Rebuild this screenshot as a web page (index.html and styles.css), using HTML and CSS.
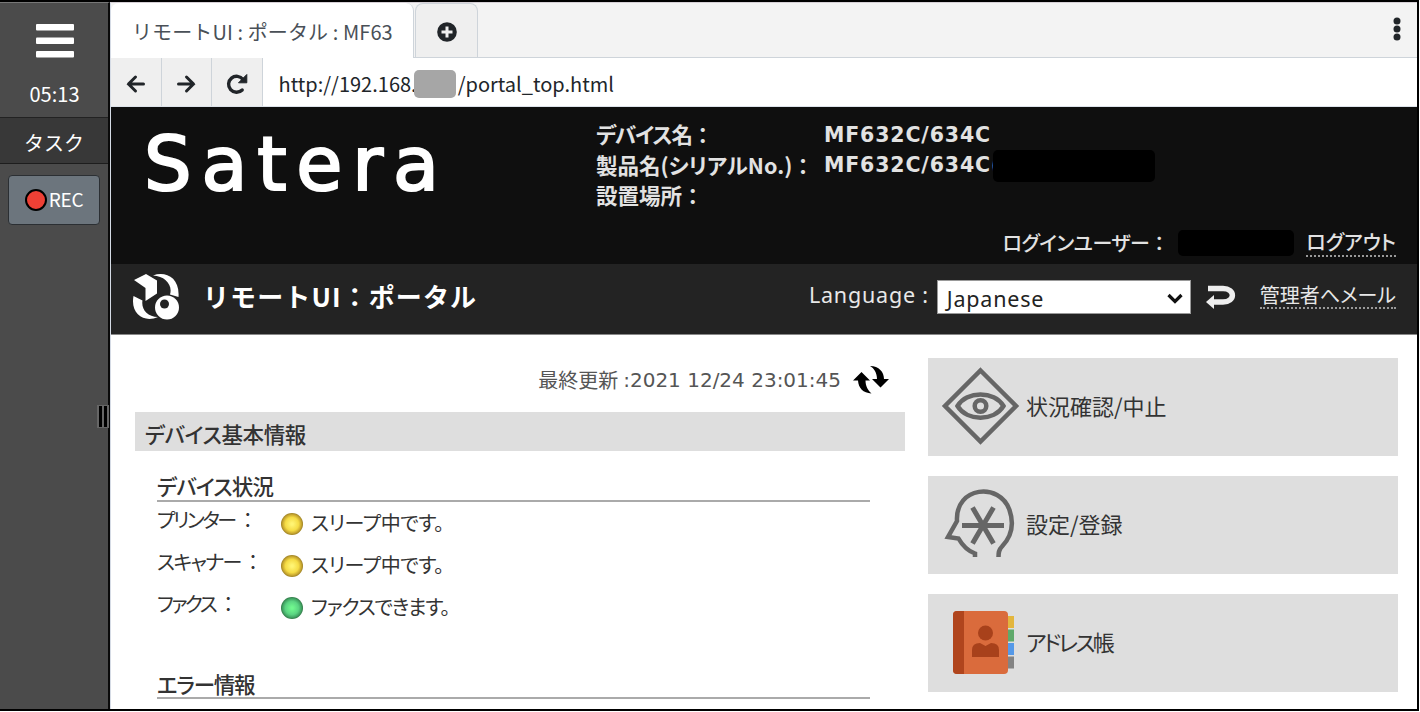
FILE: index.html
```html
<!DOCTYPE html>
<html lang="ja">
<head>
  <meta charset="UTF-8">
  <meta name="viewport" content="width=device-width, initial-scale=1.0">
  <title>リモートUI : ポータル : MF632C/634C</title>
  <link rel="stylesheet" href="styles.css">
</head>
<body>
  <div class="app">
    <!-- Sidebar -->
    <aside class="sidebar">
      <div class="sidebar-top">
        <svg class="menu-icon" viewBox="0 0 38 34" fill="#fff"><rect width="38" height="6.500" rx="1"/><rect y="13.500" width="38" height="6.500" rx="1"/><rect y="27" width="38" height="6.500" rx="1"/></svg>
        <span class="clock">05:13</span>
      </div>
      <div class="task-title">タスク</div>
      <button type="button" class="rec-button"><span class="rec-dot"></span><span class="rec-text">REC</span></button>
      <div class="resize-handle"><i></i><i></i></div>
    </aside>

    <main class="browser">
      <!-- Tabs -->
      <div class="tabs">
        <div class="tab"><span class="tab-text">リモートUI : ポータル : MF63</span></div>
        <div class="tab-add">
          <svg width="20" height="20" viewBox="0 0 20 20"><circle cx="10" cy="10" r="9.800" fill="#212529"/><path d="M10 4.500v11M4.500 10h11" stroke="#f0f0f0" stroke-width="3"/></svg>
        </div>
        <svg class="more-icon" width="8" height="24" viewBox="0 0 8 24" fill="#212529"><circle cx="4" cy="4" r="3.500"/><circle cx="4" cy="12" r="3.500"/><circle cx="4" cy="20" r="3.500"/></svg>
      </div>
      <!-- Address bar -->
      <div class="address-bar">
        <div class="nav-button">
          <svg width="20" height="20" viewBox="0 0 20 20" fill="none" stroke="#212529" stroke-width="3" stroke-linecap="round"><path d="M9.500 3 2.500 10l7 7M2.500 10H17.500"/></svg>
        </div>
        <div class="nav-button">
          <svg width="20" height="20" viewBox="0 0 20 20" fill="none" stroke="#212529" stroke-width="3" stroke-linecap="round"><path d="M10.500 3 17.500 10l-7 7M17.500 10H2.500"/></svg>
        </div>
        <div class="nav-button">
          <svg width="22" height="22" viewBox="0 0 22 22"><path d="M17 6.500A8 8 0 1 0 16.200 17" fill="none" stroke="#212529" stroke-width="3.400" stroke-linecap="round"/><path d="M20.800 1.500v8.300h-8.300z" fill="#212529" stroke="#212529" stroke-linejoin="round"/></svg>
        </div>
        <div class="url">http://192.168.<span class="mask mask-url"></span><span>/portal_top.html</span></div>
      </div>

      <!-- Device header -->
      <header class="device-header">
        <div class="brand">Satera</div>
        <dl class="device-info">
          <dt><span class="w-name">デバイス名</span><span class="colon">：</span></dt><dd>MF632C/634C</dd>
          <dt><span class="w-serial">製品名(シリアルNo.)</span><span class="colon">：</span></dt><dd>MF632C/634C(<span class="mask mask-serial"></span></dd>
          <dt><span>設置場所</span><span class="colon">：</span></dt><dd></dd>
        </dl>
        <div class="login">
          <span class="login-label">ログインユーザー</span><span class="colon">：</span>
          <span class="mask mask-user"></span>
          <a class="logout">ログアウト</a>
        </div>
      </header>

      <div class="title-bar">
        <svg class="portal-icon" width="48" height="48" viewBox="0 0 48 48">
          <path d="M2 7 14 1 25 7.500v13L13.500 28V15z" fill="#fff"/>
          <path d="M21 2.500C33-2 48 4 46.500 24L38 21.500C41 12 33 3 21 2.500z" fill="#fff"/>
          <path d="M1.500 23 10.500 27.500C9 36 15 44 26 44 13 50-2 42 1.500 23z" fill="#fff"/>
          <circle cx="35" cy="34.500" r="12" fill="#fff"/><circle cx="32.500" cy="31" r="4.500" fill="#232323"/>
        </svg>
        <h1>リモートUI：ポータル</h1>
        <span class="lang-label">Language :</span>
        <div class="select"><span>Japanese</span>
          <svg width="16" height="12" viewBox="0 0 16 12"><path d="M1.500 2 8 8.500 14.500 2" fill="none" stroke="#111" stroke-width="3.200"/></svg>
        </div>
        <svg class="apply-icon" width="30" height="26" viewBox="0 0 30 26"><path d="M2 4.500H17C29.500 4.500 29.500 18 17 18H8" fill="none" stroke="#eee" stroke-width="5.500"/><path d="M0 18 8 11v14z" fill="#eee"/></svg>
        <a class="mail">管理者へメール</a>
      </div>

      <!-- Portal content -->
      <div class="content">
        <section class="status">
          <div class="updated">
            <span class="updated-label">最終更新</span><span class="updated-time">:2021 12/24 23:01:45</span>
            <svg class="refresh-icon" width="36" height="30" viewBox="0 0 36 30"><path d="M8.500 7 17 15.500H12.500C12.500 21 15 25.500 18.500 28.500 10 28 5.500 23 5 15.500H0z"/><path d="M17 1C26 1 31 7 31 14h5L27.500 22.500 19 14H24C24 8 21 3 17 1z"/></svg>
          </div>
          <h2>デバイス基本情報</h2>
          <h3 class="h-status">デバイス状況</h3>
          <ul>
            <li><span class="name"><span class="n-printer">プリンター</span><span class="colon">：</span></span><i class="lamp yellow"></i><span class="state">スリープ中です。</span></li>
            <li><span class="name"><span class="n-scanner">スキャナー</span><span class="colon">：</span></span><i class="lamp yellow"></i><span class="state">スリープ中です。</span></li>
            <li><span class="name"><span class="n-fax">ファクス</span><span class="colon">：</span></span><i class="lamp green"></i><span class="state state-fax">ファクスできます。</span></li>
          </ul>
          <h3 class="h-error">エラー情報</h3>
        </section>

        <nav class="menu">
          <a class="menu-item">
            <svg width="80" height="80" viewBox="0 0 80 80" fill="none" stroke="#666" stroke-width="4.500"><path d="M40.500 4.500 76 40 40.500 75.500 5 40z"/><path d="M17.500 40C27 24.500 54 24.500 63.500 40 54 55.500 27 55.500 17.500 40z"/><circle cx="40.500" cy="40" r="5.800"/></svg>
            <span>状況確認/中止</span>
          </a>
          <a class="menu-item">
            <svg width="80" height="80" viewBox="0 0 80 80" fill="none" stroke="#666" stroke-width="4.500"><path d="M35 73V69.500C28 67 22.500 61.500 18.500 54.500L8 53 17 37C15 2 60-2 69.500 26 75 42 71 53 62 62.500 58.500 66 58.500 69 58.500 73"/><path d="M22 41.500h42M32.500 23.500l21 36M53.500 23.500l-21 36" stroke-width="5"/></svg>
            <span>設定/登録</span>
          </a>
          <a class="menu-item">
            <svg width="80" height="80" viewBox="0 0 80 80">
              <path d="M66 14h8v12h-8z" fill="#e3b63d"/><path d="M66 27.500h8v12h-8z" fill="#5fa96b"/><path d="M66 41h8v12h-8z" fill="#5599e8"/><path d="M66 54.500h8v12h-8z" fill="#838383"/>
              <rect x="13" y="9" width="55" height="63" rx="4" fill="#da6b3c"/>
              <path d="M17 9h7v63h-7a4 4 0 0 1-4-4V13a4 4 0 0 1 4-4z" fill="#b0451d"/>
              <circle cx="45.500" cy="31" r="7.500" fill="#a8411b"/><path d="M32 55V48q0-7 8-7l5.500 3 5.500-3q8 0 8 7v7z" fill="#a8411b"/>
            </svg>
            <span class="m-address">アドレス帳</span>
          </a>
        </nav>
      </div>
    </main>
  </div>
</body>
</html>
```
FILE: styles.css
```css
* {
  box-sizing: border-box;
}

body {
  margin: 0;
  width: 1420px;
  height: 712px;
  background: #fff;
  overflow: hidden;
  font-family: "Noto Sans CJK JP", sans-serif;
  font-size: 20px;
  line-height: 1;
  white-space: nowrap;
}

h1, h2, h3, ul, dl, dd {
  margin: 0;
  padding: 0;
}

.app {
  display: flex;
  width: 1419px;
  height: 711px;
  border: solid #000;
  border-width: 2px 2px 2px 0;
}

/* Sidebar */
.sidebar {
  position: relative;
  display: flex;
  flex-direction: column;
  align-items: center;
  width: 110px;
  background: #4b4b4b;
  border-right: 2px solid #0a0a0a;
  border-top: 1px solid #777;
  color: #fff;
}

.sidebar-top {
  display: flex;
  flex-direction: column;
  align-items: center;
  width: 100%;
  height: 115px;
  padding: 21px 0 0 1px;
  border-bottom: 1px solid #222;
}

.menu-icon {
  width: 38px;
  height: 34px;
}

.clock {
  margin-top: 26px;
}

.task-title {
  width: 100%;
  height: 46px;
  line-height: 49px;
  text-align: center;
  background: #383838;
  border-bottom: 1px solid #1d1d1d;
}

.rec-button {
  display: flex;
  align-items: center;
  justify-content: center;
  gap: 2px;
  width: 92px;
  height: 50px;
  margin: 11px 0 0;
  padding: 0;
  border: 1px solid #2b2f33;
  border-radius: 4px;
  background: #6c757d;
  color: #fff;
  font: 19px "Noto Sans CJK JP", sans-serif;
}

.rec-text {
  padding-bottom: 3px;
  letter-spacing: -0.3px;
}

.rec-dot {
  width: 22px;
  height: 22px;
  border: 2px solid #000;
  border-radius: 50%;
  background: #ee4035;
}

.resize-handle {
  position: absolute;
  top: 402px;
  right: -1px;
  display: flex;
  gap: 2px;
  padding: 1px 2px 1px 2px;
  background: #666;
}

.resize-handle i {
  width: 3px;
  height: 21px;
  background: #000;
}

/* Browser chrome */
.browser {
  flex: 1;
  display: flex;
  flex-direction: column;
  border-left: 1px solid #d5dbe5;
  border-top: 1px solid #d6d0d6;
}

.tabs {
  display: flex;
  height: 55px;
  background: #f3f3f3;
  border-bottom: 1px solid #ced4da;
}

.tab {
  width: 303px;
  height: 55px;
  padding-left: 21px;
  line-height: 57px;
  background: #fff;
  border-right: 1px solid #ced4da;
  border-radius: 8px 8px 0 0;
  color: #495057;
}

.tab-text {
  letter-spacing: 0.1px;
}

.tab-add {
  display: flex;
  align-items: center;
  justify-content: center;
  width: 63px;
  margin-left: 1px;
  padding-top: 2px;
  background: #efefef;
  border: 1px solid #ced4da;
  border-bottom: 0;
  border-radius: 8px 8px 0 0;
}

.more-icon {
  margin: 14px 16px 0 auto;
}

.address-bar {
  display: flex;
  height: 49px;
  background: #fff;
  border-bottom: 1px solid #dde3ea;
}

.nav-button {
  display: flex;
  align-items: center;
  justify-content: center;
  width: 50.500px;
  padding-top: 4px;
  background: #efefef;
  border-right: 1px solid #ced4da;
}

.url {
  display: flex;
  align-items: center;
  padding: 4px 0 0 16px;
  color: #212529;
}

.mask {
  display: inline-block;
  flex: none;
  border-radius: 5px;
  background: #000;
}

.mask-url {
  width: 42px;
  height: 28px;
  margin: 0 2px 0 -3px;
  background: #a6a6a6;
}

/* Device header */
.device-header {
  display: grid;
  grid-template-columns: 485px 1fr;
  grid-template-rows: 117px 40px;
  height: 157px;
  background: #0f0f0f;
  color: #e2e2e2;
  font-feature-settings: "palt";
}

.colon {
  font-feature-settings: normal;
}

.brand {
  padding: 20px 0 0 33px;
  font-family: "DejaVu Sans", sans-serif;
  font-size: 75px;
  letter-spacing: 9.800px;
  color: #fff;
  -webkit-text-stroke: 2.200px #fff;
}

.device-info {
  display: grid;
  grid-template-columns: 228px 1fr;
  grid-auto-rows: 30.500px;
  align-content: start;
  padding-top: 13px;
  font-size: 21.500px;
  font-weight: 700;
  line-height: 27px;
}

.w-name {
  letter-spacing: -1.2px;
}

.device-info dd {
  display: flex;
  align-items: center;
  font-family: "DejaVu Sans", sans-serif;
  font-size: 20.500px;
  letter-spacing: 0.85px;
}

.mask-serial {
  width: 162px;
  height: 32px;
  margin-left: -8px;
}

.login {
  grid-column: 1 / 3;
  display: flex;
  align-items: center;
  justify-content: flex-end;
  padding: 0 21px 3px 0;
  font-weight: 500;
}

.login-label {
  letter-spacing: -0.5px;
}

.mask-user {
  width: 116px;
  height: 26px;
  margin: 0 12px 0 9px;
}

.logout {
  padding: 4px 0 3px;
  border-bottom: 2px dotted #999;
}

/* Title bar */
.title-bar {
  display: flex;
  align-items: center;
  height: 71px;
  padding: 0 21px 4px;
  background: #232323;
  border-bottom: 1px solid #888;
  color: #e8e8e8;
}

.title-bar h1 {
  margin: -3px 0 0 23px;
  font-size: 26px;
  letter-spacing: 1.1px;
  color: #fff;
}

.lang-label {
  margin: -4px 0 0 auto;
  font-family: "Noto Sans", sans-serif;
  font-size: 21.500px;
  letter-spacing: 0.8px;
}

.select {
  display: flex;
  align-items: center;
  justify-content: space-between;
  width: 254px;
  height: 34px;
  margin: 0 15px 0 8px;
  padding: 3px 7px 0 9px;
  background: #fff;
  border: 1px solid #999;
  color: #222;
  font-family: "Noto Sans", sans-serif;
  font-size: 21.500px;
  letter-spacing: 0.8px;
}

.mail {
  margin-left: 24px;
  padding-bottom: 2px;
  border-bottom: 2px dotted #999;
  font-feature-settings: "palt";
}

/* Content */
.content {
  flex: 1;
  display: flex;
  min-height: 0;
  overflow: hidden;
  background: #fff;
  color: #333;
  font-feature-settings: "palt";
}

.status {
  width: 794px;
  padding: 0 0 0 24px;
}

.updated {
  display: flex;
  align-items: center;
  height: 77px;
  padding: 13px 16px 0 0;
  justify-content: flex-end;
  color: #555;
}

.updated-time {
  margin: 0 12px 0 5px;
  font-family: "DejaVu Sans", sans-serif;
  font-size: 20px;
}

.refresh-icon {
  fill: #000;
}

.status h2 {
  height: 39px;
  padding-left: 10px;
  background: #dedede;
  font-size: 21.500px;
  line-height: 44px;
  font-weight: 500;
  letter-spacing: -0.4px;
}

.status h3 {
  width: 713px;
  margin-left: 22px;
  border-bottom: 2px solid #aaa;
  font-size: 21.500px;
  font-weight: 500;
  letter-spacing: -0.8px;
}

.status .h-status {
  margin-top: 20px;
  height: 31px;
  line-height: 30px;
}

.status .h-error {
  margin-top: 43px;
  height: 28px;
  line-height: 26px;
  letter-spacing: -1.2px;
}

.status ul {
  margin-left: 22px;
  list-style: none;
}

.status li {
  display: flex;
  height: 42px;
}

.name {
  width: 124px;
  padding-top: 8px;
}

.n-printer {
  letter-spacing: -2.4px;
  margin-right: 3px;
}

.n-scanner {
  letter-spacing: -1.6px;
  margin-right: 2px;
}

.n-fax {
  letter-spacing: -2.5px;
  margin-right: 3px;
}

.lamp {
  width: 22px;
  height: 22px;
  margin: 11px 8px 0 0;
  border-radius: 50%;
}

.state {
  padding-top: 11px;
  letter-spacing: -0.4px;
}

.state-fax {
  letter-spacing: -1.2px;
}

.yellow {
  background: radial-gradient(circle closest-side, #fff473 10%, #f5dc45 60%, #c9a830 85%, #9c8024 100%);
}

.green {
  background: radial-gradient(circle closest-side, #70f78e 10%, #5bd482 60%, #42a564 85%, #307846 100%);
}

.menu {
  display: flex;
  flex-direction: column;
  gap: 20px;
  padding: 23px 0 0 23px;
}

.menu-item {
  display: flex;
  align-items: center;
  width: 470px;
  height: 98px;
  padding: 0 0 2px 12px;
  background: #dedede;
  font-size: 22px;
}

.menu-item span {
  margin-left: 6px;
  padding-bottom: 3px;
}

.menu-item .m-address {
  letter-spacing: -2.6px;
}
```
